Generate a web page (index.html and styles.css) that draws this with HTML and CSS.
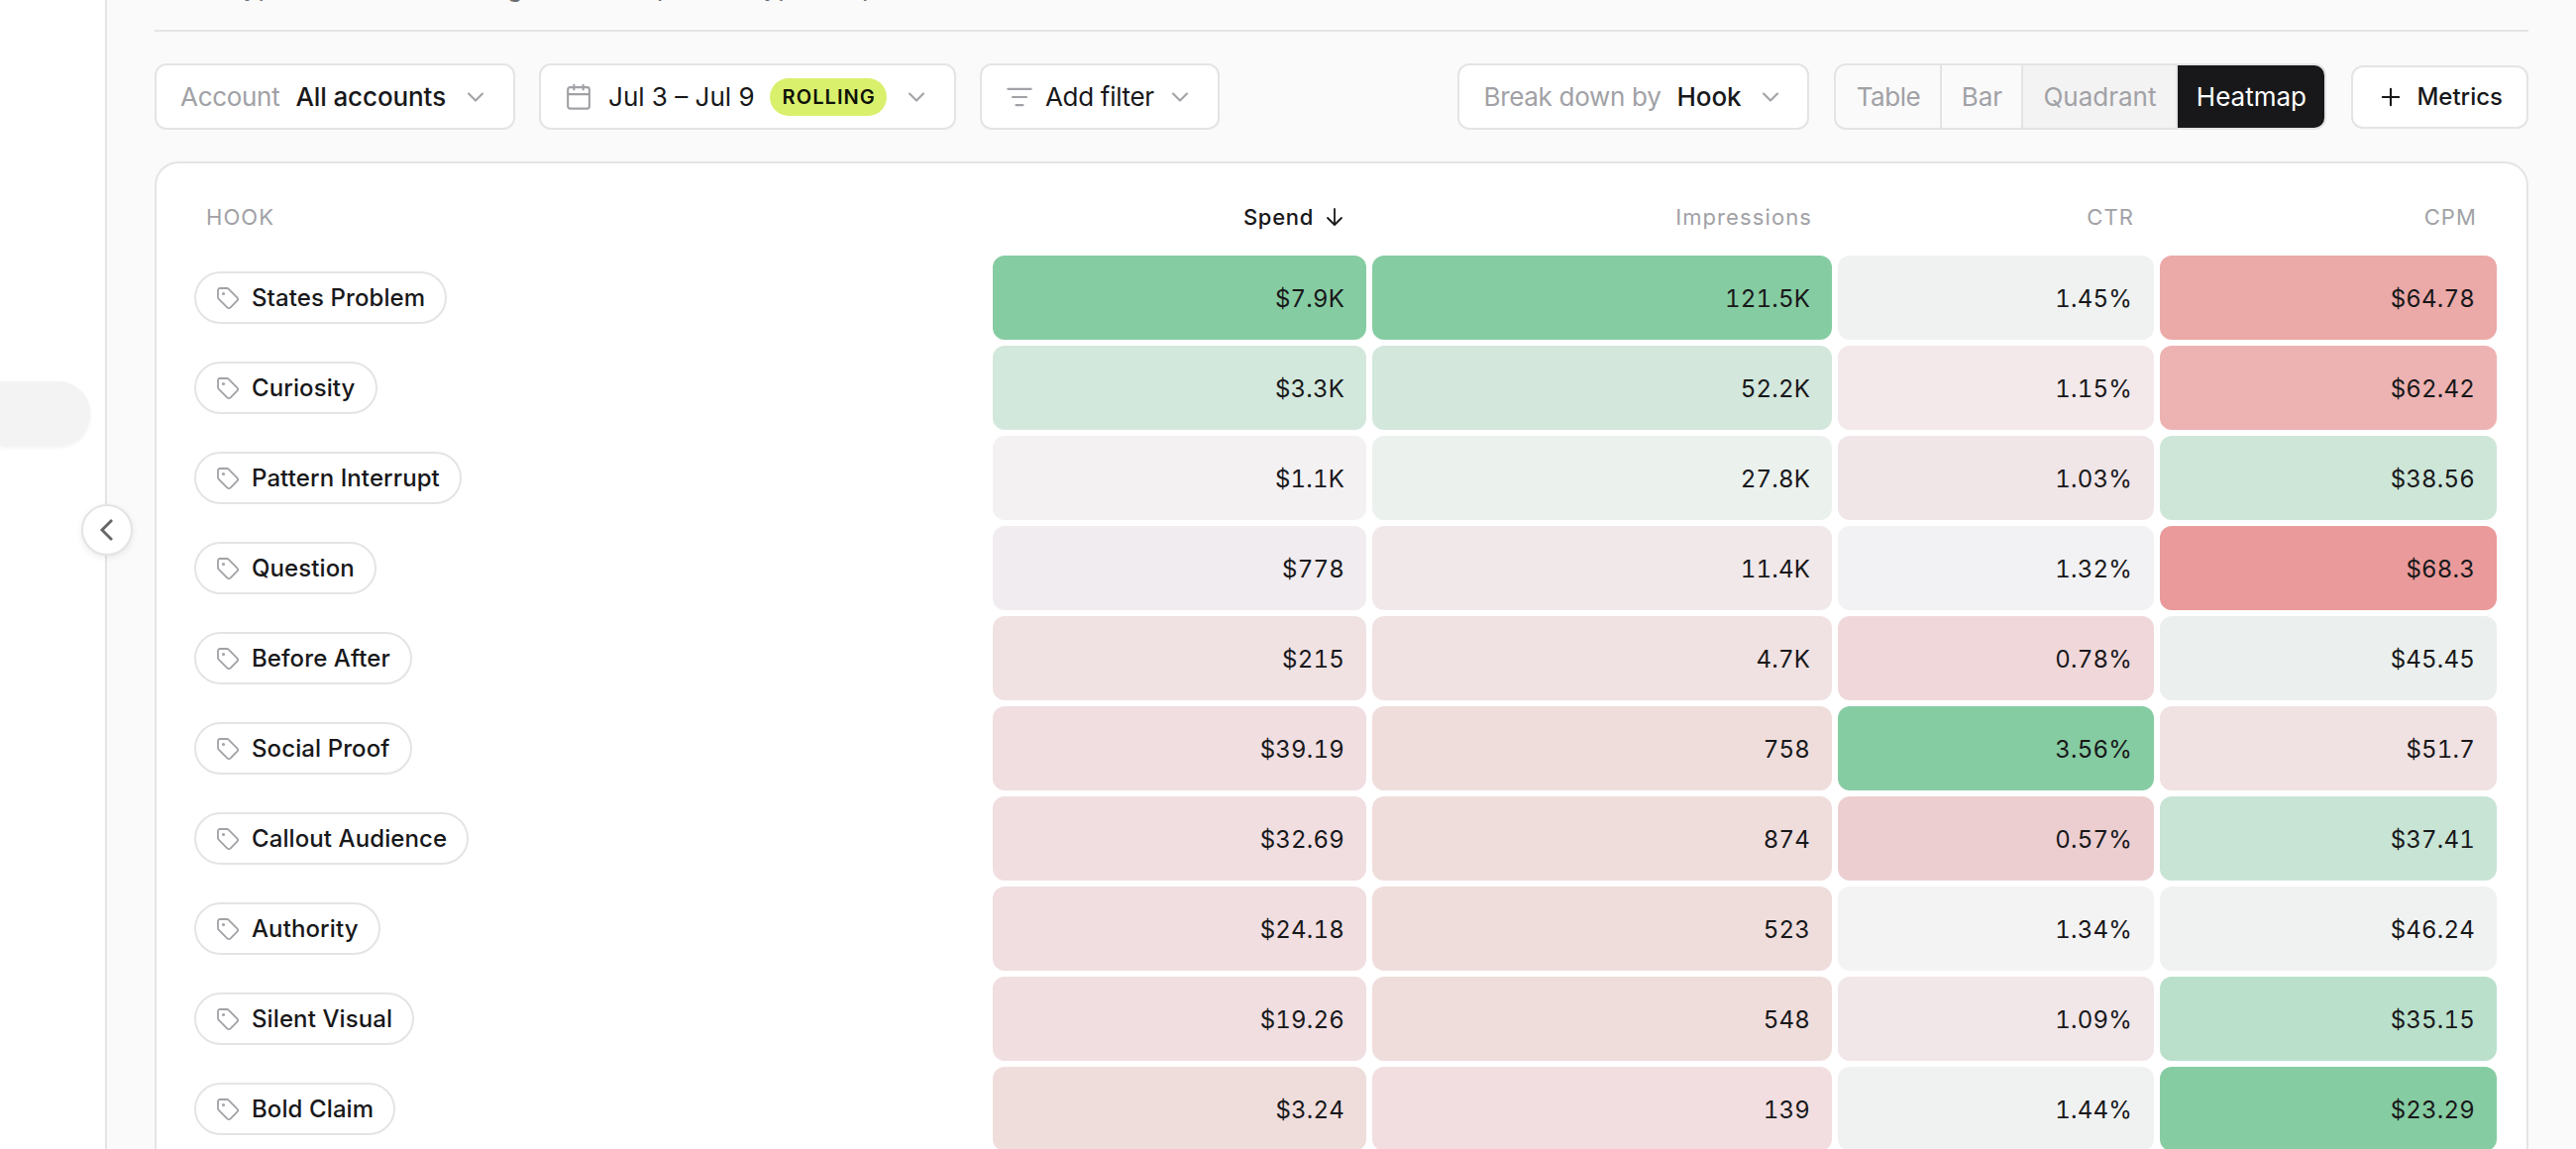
FILE: index.html
```
<!DOCTYPE html>
<html lang="en">
<head>
    <meta charset="UTF-8">
    <title>Hooks</title>
    <link rel="stylesheet" href="styles.css">
</head>
<body>

<svg class="sprite" aria-hidden="true">
    <symbol id="chevron" viewBox="0 0 24 24"><path d="m6 9 6 6 6-6"/></symbol>
    <symbol id="chevron-left" viewBox="0 0 24 24"><path d="m15 18-6-6 6-6"/></symbol>
    <symbol id="calendar" viewBox="0 0 24 24"><path d="M8 1.5v4M16 1.5v4M3 9.5h18"/><rect x="2.7" y="3.5" width="18.6" height="18.5" rx="2"/></symbol>
    <symbol id="filter" viewBox="0 0 24 24"><path d="M2 5h20M6 12h12M9 19h6"/></symbol>
    <symbol id="plus" viewBox="0 0 24 24"><path d="M5 12h14M12 5v14"/></symbol>
    <symbol id="arrow-down" viewBox="0 0 24 24"><path d="M12 4v16M5 13l7 7 7-7"/></symbol>
    <symbol id="tag" viewBox="0 0 24 24"><path d="M12.586 2.586A2 2 0 0 0 11.172 2H4a2 2 0 0 0-2 2v7.172a2 2 0 0 0 .586 1.414l8.704 8.704a2.426 2.426 0 0 0 3.42 0l6.58-6.58a2.426 2.426 0 0 0 0-3.42z"/><circle cx="7.5" cy="7.5" r=".7"/></symbol>
</svg>

<aside class="sidebar">
    <div class="sidebar-item"></div>
    <button class="collapse" aria-label="Collapse sidebar"><svg class="icon"><use href="#chevron-left"/></svg></button>
</aside>

<main>
    <p class="intro">Which types of ads are driving the most spend in types of place</p>

    <div class="toolbar">
        <button class="select"><span class="label">Account</span><b>All accounts</b><svg class="icon"><use href="#chevron"/></svg></button>
        <button class="select date"><svg class="icon"><use href="#calendar"/></svg><span>Jul 3 – Jul 9</span><span class="badge">ROLLING</span><svg class="icon"><use href="#chevron"/></svg></button>
        <button class="select filter"><svg class="icon"><use href="#filter"/></svg><span>Add filter</span><svg class="icon"><use href="#chevron"/></svg></button>

        <button class="select breakdown"><span class="label">Break down by</span><b>Hook</b><svg class="icon"><use href="#chevron"/></svg></button>
        <div class="views">
            <button class="view-table">Table</button>
            <button class="view-bar">Bar</button>
            <button class="view-quadrant">Quadrant</button>
            <button class="view-heatmap">Heatmap</button>
        </div>
        <button class="metrics"><svg class="icon"><use href="#plus"/></svg><span>Metrics</span></button>
    </div>

    <section class="panel">
        <div class="row head">
            <span class="name">HOOK</span>
            <span class="sorted"><span>Spend</span><svg class="icon"><use href="#arrow-down"/></svg></span>
            <span>Impressions</span>
            <span>CTR</span>
            <span>CPM</span>
        </div>
        <div class="row">
            <span class="pill"><svg class="icon"><use href="#tag"/></svg><span>States Problem</span></span>
            <span class="cell" style="background: #86cca2">$7.9K</span>
            <span class="cell" style="background: #86cca2">121.5K</span>
            <span class="cell" style="background: #eff2f1">1.45%</span>
            <span class="cell" style="background: #eba9a8">$64.78</span>
        </div>
        <div class="row">
            <span class="pill"><svg class="icon"><use href="#tag"/></svg><span>Curiosity</span></span>
            <span class="cell" style="background: #d3e8dc">$3.3K</span>
            <span class="cell" style="background: #d3e7dc">52.2K</span>
            <span class="cell" style="background: #f3e9ea">1.15%</span>
            <span class="cell" style="background: #edb3b2">$62.42</span>
        </div>
        <div class="row">
            <span class="pill"><svg class="icon"><use href="#tag"/></svg><span>Pattern Interrupt</span></span>
            <span class="cell" style="background: #f4f1f3">$1.1K</span>
            <span class="cell" style="background: #ebf1ed">27.8K</span>
            <span class="cell" style="background: #f0e5e7">1.03%</span>
            <span class="cell" style="background: #cde6d8">$38.56</span>
        </div>
        <div class="row">
            <span class="pill"><svg class="icon"><use href="#tag"/></svg><span>Question</span></span>
            <span class="cell" style="background: #f1ecef">$778</span>
            <span class="cell" style="background: #f1e8e9">11.4K</span>
            <span class="cell" style="background: #f2f1f3">1.32%</span>
            <span class="cell" style="background: #ea9a9a">$68.3</span>
        </div>
        <div class="row">
            <span class="pill"><svg class="icon"><use href="#tag"/></svg><span>Before After</span></span>
            <span class="cell" style="background: #f0e2e3">$215</span>
            <span class="cell" style="background: #f0e1e2">4.7K</span>
            <span class="cell" style="background: #f0d8da">0.78%</span>
            <span class="cell" style="background: #ebf0ee">$45.45</span>
        </div>
        <div class="row">
            <span class="pill"><svg class="icon"><use href="#tag"/></svg><span>Social Proof</span></span>
            <span class="cell" style="background: #f0dee1">$39.19</span>
            <span class="cell" style="background: #efdddc">758</span>
            <span class="cell" style="background: #86cca2">3.56%</span>
            <span class="cell" style="background: #f0e1e2">$51.7</span>
        </div>
        <div class="row">
            <span class="pill"><svg class="icon"><use href="#tag"/></svg><span>Callout Audience</span></span>
            <span class="cell" style="background: #f0dee1">$32.69</span>
            <span class="cell" style="background: #efdddc">874</span>
            <span class="cell" style="background: #ecced0">0.57%</span>
            <span class="cell" style="background: #c8e4d5">$37.41</span>
        </div>
        <div class="row">
            <span class="pill"><svg class="icon"><use href="#tag"/></svg><span>Authority</span></span>
            <span class="cell" style="background: #f0dee1">$24.18</span>
            <span class="cell" style="background: #efdddc">523</span>
            <span class="cell" style="background: #f3f3f4">1.34%</span>
            <span class="cell" style="background: #f0f2f2">$46.24</span>
        </div>
        <div class="row">
            <span class="pill"><svg class="icon"><use href="#tag"/></svg><span>Silent Visual</span></span>
            <span class="cell" style="background: #f0dee1">$19.26</span>
            <span class="cell" style="background: #efdddc">548</span>
            <span class="cell" style="background: #f1e6e8">1.09%</span>
            <span class="cell" style="background: #bae0cb">$35.15</span>
        </div>
        <div class="row">
            <span class="pill"><svg class="icon"><use href="#tag"/></svg><span>Bold Claim</span></span>
            <span class="cell" style="background: #efdddc">$3.24</span>
            <span class="cell" style="background: #f2dee0">139</span>
            <span class="cell" style="background: #f0f2f2">1.44%</span>
            <span class="cell" style="background: #86cca2">$23.29</span>
        </div>
    </section>
</main>

</body>
</html>
```

FILE: styles.css
```
*
{
    box-sizing: border-box;
}

body
{
    display: flex;
    height: 1160px;
    margin: 0;
    overflow: hidden;
    background: #fafafa;
    color: #18181a;
    font-family: Inter, sans-serif;
    font-size: 26px;
}

button
{
    margin: 0;
    padding: 0;
    border: none;
    background: none;
    color: inherit;
    font: inherit;
}

b
{
    font-weight: 500;
    letter-spacing: -0.1px;
}

.sprite
{
    position: absolute;
    width: 0;
    height: 0;
}

.icon
{
    flex: none;
    width: 28px;
    height: 28px;
    fill: none;
    stroke: #a1a1a6;
    stroke-width: 1.8;
    stroke-linecap: round;
    stroke-linejoin: round;
}

/* sidebar */

.sidebar
{
    position: relative;
    z-index: 1;
    flex: none;
    width: 108px;
    padding-top: 385px;
    border-right: 2px solid #e4e4e4;
    background: #fff;
}

.sidebar-item
{
    width: 91px;
    height: 65px;
    border-radius: 0 32px 32px 0;
    background: #f3f3f3;
    box-shadow: 0 2px 4px rgba(0, 0, 0, 0.06);
}

.collapse
{
    display: flex;
    align-items: center;
    justify-content: center;
    position: absolute;
    top: 509px;
    right: -28px;
    width: 52px;
    height: 52px;
    border: 2px solid #e4e4e4;
    border-radius: 50%;
    background: #fff;
    box-shadow: 0 2px 6px rgba(0, 0, 0, 0.08);
}

.collapse .icon
{
    width: 40px;
    height: 40px;
    stroke: #666;
    stroke-width: 1.7;
    stroke-linecap: butt;
    stroke-linejoin: miter;
}

/* content */

main
{
    display: flex;
    flex: 1;
    flex-direction: column;
    min-width: 0;
    height: 1160px;
    padding: 0 48px;
    overflow: hidden;
}

.intro
{
    flex: none;
    height: 61px;
    margin: -29px 0 0;
    border-bottom: 2px solid #e4e4e4;
    color: #6b6b70;
    line-height: 32px;
    text-indent: -4px;
}

.toolbar
{
    display: flex;
    flex: none;
    align-items: center;
    gap: 24px;
    height: 67px;
    margin: 32px 0;
}

.select,
.metrics
{
    display: flex;
    align-items: center;
    gap: 16px;
    height: 67px;
    padding: 0 24px;
    border: 2px solid #e4e4e4;
    border-radius: 12px;
    background: #fff;
    white-space: nowrap;
}

.label
{
    color: #a1a1a6;
    letter-spacing: -0.3px;
}

.filter
{
    gap: 12px;
    letter-spacing: -0.3px;
}

.badge
{
    height: 38px;
    margin-left: -1px;
    padding: 0 11px 0 13px;
    border-radius: 19px;
    background: #d9f06c;
    color: #0f1108;
    font-size: 20px;
    font-weight: 600;
    letter-spacing: 1.1px;
    line-height: 38px;
}

.breakdown
{
    margin-left: auto;
    padding: 0 23px 0 24px;
}

.views
{
    display: flex;
    height: 67px;
    margin: 0 1px;
    overflow: hidden;
    border: 2px solid #e4e4e4;
    border-radius: 12px;
    color: #a1a1a6;
}

.views button + button
{
    border-left: 2px solid #e4e4e4;
}

.view-table
{
    width: 105px;
    letter-spacing: -0.5px;
}

.view-bar
{
    width: 82px;
}

.views .view-quadrant
{
    width: 156px;
    background: #f3f3f3;
}

.views .view-heatmap
{
    width: 150px;
    background: #18181a;
    color: #fff;
}

.metrics
{
    gap: 12px;
    height: 64px;
    font-size: 24px;
    font-weight: 500;
}

.metrics .icon
{
    stroke: #18181a;
}

/* heatmap */

.panel
{
    flex: 1;
    min-height: 0;
    padding: 15px 30px 0 38px;
    overflow: hidden;
    border: 2px solid #e4e4e4;
    border-bottom: none;
    border-radius: 24px 24px 0 0;
    background: #fff;
}

.row
{
    display: grid;
    grid-template-columns: 1fr 377px 464px 319px 340px;
    gap: 6px;
    align-items: center;
    margin-bottom: 6px;
}

.head
{
    height: 78px;
    margin: 0;
    color: #a1a1a6;
    font-size: 22px;
    letter-spacing: 1.1px;
    text-align: right;
}

.head > span
{
    padding-right: 20px;
}

.head .name
{
    padding-left: 12px;
    text-align: left;
}

.head .sorted
{
    display: flex;
    align-items: center;
    justify-content: flex-end;
    gap: 9px;
    color: #18181a;
    font-weight: 500;
    letter-spacing: 0.7px;
}

.head .icon
{
    width: 24px;
    height: 24px;
    stroke: #18181a;
}

.pill
{
    display: flex;
    align-items: center;
    justify-self: start;
    gap: 12px;
    height: 53px;
    padding: 0 20px;
    border: 2px solid #e4e4e4;
    border-radius: 27px;
    font-size: 24px;
    font-weight: 500;
    letter-spacing: 0.1px;
}

.pill .icon
{
    width: 24px;
    height: 24px;
}

.cell
{
    height: 85px;
    padding: 1px 22px 0 0;
    border-radius: 12px;
    font-size: 24px;
    font-variant-numeric: tabular-nums;
    letter-spacing: 0.2px;
    line-height: 85px;
    text-align: right;
}
```
